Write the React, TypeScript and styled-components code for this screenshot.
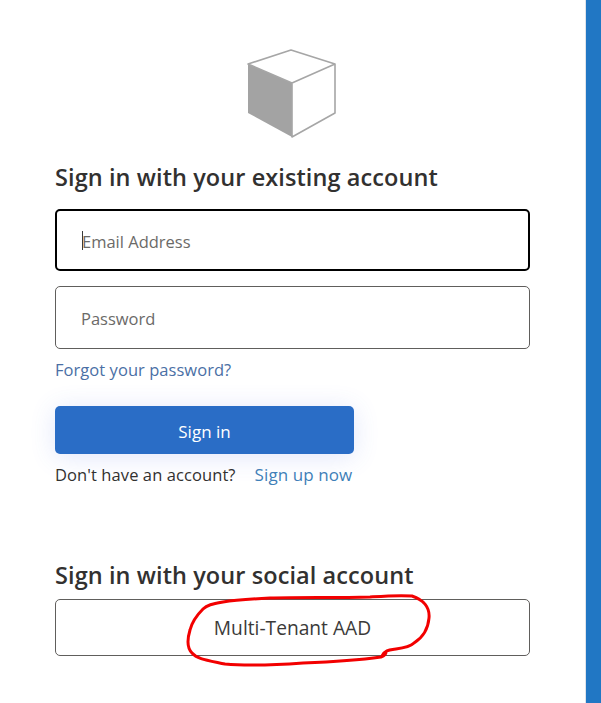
import * as React from "react";
import styled, { createGlobalStyle } from "styled-components";

const GlobalStyle = createGlobalStyle`
  html, body {
    margin: 0;
    padding: 0;
    background: #fff;
  }
  * {
    box-sizing: border-box;
  }
`;

const Page = styled.div`
  position: relative;
  display: flex;
  width: 601px;
  height: 703px;
  overflow: hidden;
  font-family: "Open Sans", "Noto Sans", sans-serif;
  color: #323130;
`;

const Panel = styled.main`
  flex: 1;
  padding: 49px 55px 0 55px;
  border-right: 1px solid #dfe3ea;
`;

const SideBar = styled.div`
  width: 15px;
  background: #2177c4;
`;

const LogoWrap = styled.div`
  display: flex;
  justify-content: center;
  padding-right: 2px;
  margin-bottom: 22px;

  & svg {
    display: block;
    width: 90px;
    height: 90px;
  }
`;

const Heading = styled.h2`
  margin: 0;
  font-size: 23.5px;
  line-height: 32px;
  font-weight: 600;
  letter-spacing: 0.08px;
  color: #323130;
`;

const Form = styled.form`
  display: flex;
  flex-direction: column;
  margin-top: 16px;
`;

const FieldWrap = styled.div`
  position: relative;
  margin-bottom: 15px;
`;

const Field = styled.input<{ $focused?: boolean }>`
  display: block;
  width: 475px;
  height: ${(p) => (p.$focused ? "62px" : "63px")};
  padding: 2px 25px 0;
  font-family: inherit;
  font-size: 16.5px;
  color: #323130;
  background: #fff;
  outline: none;
  border-radius: 5px;
  border: ${(p) => (p.$focused ? "2px solid #000" : "1px solid #605e5c")};

  &::placeholder {
    color: #6b6a68;
    opacity: 1;
  }
`;

const Caret = styled.span`
  position: absolute;
  left: 27px;
  top: 22px;
  width: 1px;
  height: 19px;
  background: #3a3a3a;
`;

const Forgot = styled.a`
  display: block;
  margin-top: -6px;
  font-size: 16.5px;
  line-height: 24px;
  letter-spacing: 0.05px;
  color: #4a6fa5;
  text-decoration: none;
`;

const SignInButton = styled.button`
  display: block;
  width: 299px;
  height: 48px;
  margin-top: 24px;
  padding: 2px 0 0;
  font-family: inherit;
  font-size: 17px;
  color: #fff;
  background: #2a6dc6;
  border: none;
  border-radius: 5px;
  box-shadow: 0 3px 26px rgba(70, 100, 230, 0.16);
`;

const SignUpRow = styled.p`
  display: flex;
  gap: 19px;
  margin: 9px 0 0;
  font-size: 16.5px;
  line-height: 24px;
  letter-spacing: 0.09px;
  color: #323130;
`;

const SignUpLink = styled.a`
  font-size: 17px;
  color: #3f7fb8;
  text-decoration: none;
`;

const SocialSection = styled.section`
  margin-top: 72px;
`;

const SocialButton = styled.button`
  display: block;
  width: 475px;
  height: 57px;
  margin-top: 8px;
  font-family: inherit;
  font-size: 19.2px;
  color: #3b3a39;
  background: #fff;
  border: 1px solid #605e5c;
  border-radius: 5px;
`;

const Scribble = styled.svg`
  position: absolute;
  left: 0;
  top: 0;
  width: 601px;
  height: 703px;
  pointer-events: none;
`;

const CubeLogo = () => (
  <svg viewBox="0 0 90 90" aria-hidden="true">
    <path d="M1 15 L45 34 V88 L1 64 Z" fill="#a3a3a3" />
    <path
      d="M1 15 L44 1 L88 15 L45 34 Z M45 34 V88 L88 64 V15"
      fill="none"
      stroke="#a6a6a6"
      strokeWidth="1.6"
      strokeLinejoin="round"
    />
  </svg>
);

export default function App() {
  return (
    <Page>
      <GlobalStyle />
      <Panel>
        <LogoWrap>
          <CubeLogo />
        </LogoWrap>
        <Heading>Sign in with your existing account</Heading>
        <Form onSubmit={(e) => e.preventDefault()}>
          <FieldWrap>
            <Field $focused type="email" placeholder="Email Address" />
            <Caret />
          </FieldWrap>
          <FieldWrap>
            <Field type="password" placeholder="Password" />
          </FieldWrap>
          <Forgot href="#">Forgot your password?</Forgot>
          <SignInButton type="submit">Sign in</SignInButton>
          <SignUpRow>
            Don't have an account?
            <SignUpLink href="#">Sign up now</SignUpLink>
          </SignUpRow>
        </Form>
        <SocialSection>
          <Heading>Sign in with your social account</Heading>
          <SocialButton type="button">Multi-Tenant AAD</SocialButton>
        </SocialSection>
      </Panel>
      <SideBar />
      <Scribble viewBox="0 0 601 703" aria-hidden="true">
        <path
          d="M382 656 C385 650 389 650 396 649 C404 648 410 647 414 643 C422 638 428 630 429 618 C430 608 424 600 412 596 C398 595 385 596 370 597 C335 598 300 597 270 598 C250 599 235 600 223 602 C212 604 207 605 203 609 C196 616 192 622 190 630 C187 640 187 648 192 653 C197 659 206 660 225 664 C245 666 275 665 303 663 C330 662 360 660 381 657 C384 656 386 654 386 652"
          fill="none"
          stroke="#f20000"
          strokeWidth="3"
          strokeLinecap="round"
        />
      </Scribble>
    </Page>
  );
}
